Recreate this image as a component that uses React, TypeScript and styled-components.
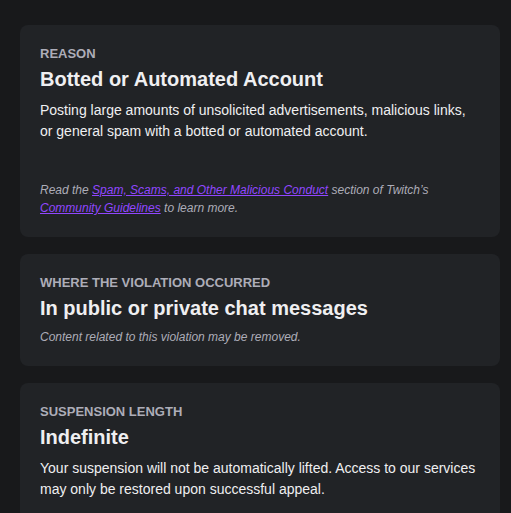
import React from "react";
import styled, { createGlobalStyle } from "styled-components";

const GlobalStyle = createGlobalStyle`
  html, body {
    margin: 0;
    padding: 0;
    background: #18191b;
  }
  body {
    font-family: "Liberation Sans", Arial, sans-serif;
    -webkit-font-smoothing: antialiased;
  }
`;

const Page = styled.div`
  display: flex;
  flex-direction: column;
  gap: 17px;
  padding: 25px 11px 0 20px;
  min-height: 513px;
  box-sizing: border-box;
  background: #18191b;
`;

const Card = styled.section`
  width: 480px;
  box-sizing: border-box;
  padding: 20px;
  background: #212326;
  border-radius: 8px;
  display: flex;
  flex-direction: column;
`;

const Label = styled.div`
  font-size: 13px;
  line-height: 18px;
  font-weight: 700;
  text-transform: uppercase;
  color: #adadb8;
`;

const Title = styled.h2`
  margin: 4px 0 0;
  font-size: 20px;
  line-height: 24px;
  font-weight: 700;
  color: #efeff1;
`;

const Body = styled.p`
  margin: 9px 0 0;
  font-size: 14px;
  line-height: 21px;
  color: #efeff1;
`;

const Note = styled.p<{ $gap: number }>`
  margin: ${(p) => p.$gap}px 0 0;
  font-size: 12px;
  line-height: 18px;
  font-style: italic;
  color: #adadb8;
`;

const Link = styled.a`
  color: #9147ff;
  text-decoration: underline;
`;

export default function App() {
  return (
    <>
      <GlobalStyle />
      <Page>
        <Card>
          <Label>Reason</Label>
          <Title>Botted or Automated Account</Title>
          <Body>
            Posting large amounts of unsolicited advertisements, malicious links,
            or general spam with a botted or automated account.
          </Body>
          <Note $gap={39}>
            Read the <Link href="#">Spam, Scams, and Other Malicious Conduct</Link>{" "}
            section of Twitch’s <Link href="#">Community Guidelines</Link> to learn more.
          </Note>
        </Card>
        <Card>
          <Label>Where the violation occurred</Label>
          <Title>In public or private chat messages</Title>
          <Note $gap={8}>Content related to this violation may be removed.</Note>
        </Card>
        <Card>
          <Label>Suspension length</Label>
          <Title>Indefinite</Title>
          <Body>
            Your suspension will not be automatically lifted. Access to our services
            may only be restored upon successful appeal.
          </Body>
        </Card>
      </Page>
    </>
  );
}
